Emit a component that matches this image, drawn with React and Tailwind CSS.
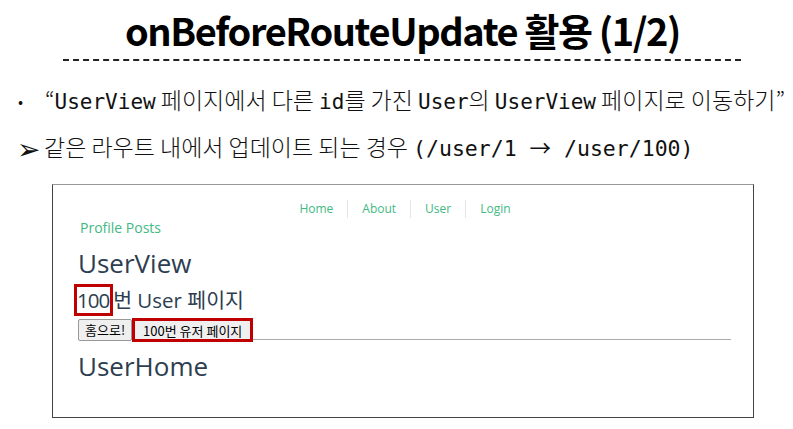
const kr = { fontFamily: '"Noto Sans CJK KR", "Noto Sans", sans-serif' }
const mono = { fontFamily: '"DejaVu Sans Mono", "Noto Sans CJK KR", monospace' }
const web = { fontFamily: '"Open Sans", "Noto Sans CJK KR", sans-serif' }

function Code({ children }) {
  return <span className="font-medium text-[21px]" style={mono}>{children}</span>
}

export default function App() {
  return (
    <div className="w-[793px] h-[429px] bg-white overflow-hidden text-black" style={kr}>
      <div className="pt-[5px] flex flex-col items-center">
        <h1 className="ml-[12px] text-[38px] leading-[50px] font-bold tracking-[-1.4px]">onBeforeRouteUpdate 활용 (1/2)</h1>
        <div className="mt-[4px] ml-[10px] w-[678px] border-t-2 border-dashed border-[#222]" />
      </div>

      <div className="mt-[23px] pl-[18px] text-[23px] leading-[30px] font-light text-[#111]">
        <div className="flex items-center whitespace-nowrap">
          <span className="w-[27px] text-[16px]">•</span>
          <span>“<Code>UserView</Code> 페이지에서 다른 <Code>id</Code>를 가진 <Code>User</Code>의 <Code>UserView</Code> 페이지로 이동하기”</span>
        </div>
        <div className="flex items-center mt-[14px] whitespace-nowrap">
          <span className="w-[27px] text-[28px] leading-[30px] -mt-[2px] -ml-[1px]">➢</span>
          <span>같은 라우트 내에서 업데이트 되는 경우 <span className="text-[21.5px]" style={mono}>(/user/1 <span style={kr} className="font-normal">→</span> /user/100)</span></span>
        </div>
      </div>

      <div className="mt-[20px] ml-[52px] w-[702px] h-[234px] border border-[#444] border-t-[#999] bg-white" style={web}>
        <nav className="flex justify-center pt-[15px] pl-[4px] text-[12px] leading-[18px] text-[#42b983]">
          <span className="pr-[14px]">Home</span>
          <span className="px-[14px] border-l border-[#e5e5e5]">About</span>
          <span className="px-[14px] border-l border-[#e5e5e5]">User</span>
          <span className="pl-[14px] border-l border-[#e5e5e5]">Login</span>
        </nav>
        <div className="pl-[27px] text-[14px] leading-[20px] text-[#42b983]">Profile Posts</div>
        <div className="pl-[25px] pr-[22px] text-[#2c3e50]">
          <div className="mt-[8px] text-[26px] leading-[34px]">UserView</div>
          <div className="mt-[4px] text-[20.5px] leading-[26px] flex items-center">
            <span className="border-[3px] border-[#c00000] -ml-[4px] tracking-[-1px] pr-[1px]">100</span>
            <span>번 User 페이지</span>
          </div>
          <div className="relative mt-[2px]">
            <div className="flex items-center h-[24px] relative z-10">
              <button className="h-[22px] px-[6px] text-[13px] text-black bg-[#efefef] border border-[#999] rounded-[2px]" style={kr}>홈으로!</button>
              <button className="h-[24px] px-[8px] text-[13px] text-black bg-[#efefef] border-[3px] border-[#c00000]" style={kr}>100번 유저 페이지</button>
            </div>
            <div className="absolute left-0 right-0 top-[21px] border-t border-[#aaa]" />
          </div>
          <div className="mt-[7px] text-[26px] leading-[34px]">UserHome</div>
        </div>
      </div>
    </div>
  )
}
